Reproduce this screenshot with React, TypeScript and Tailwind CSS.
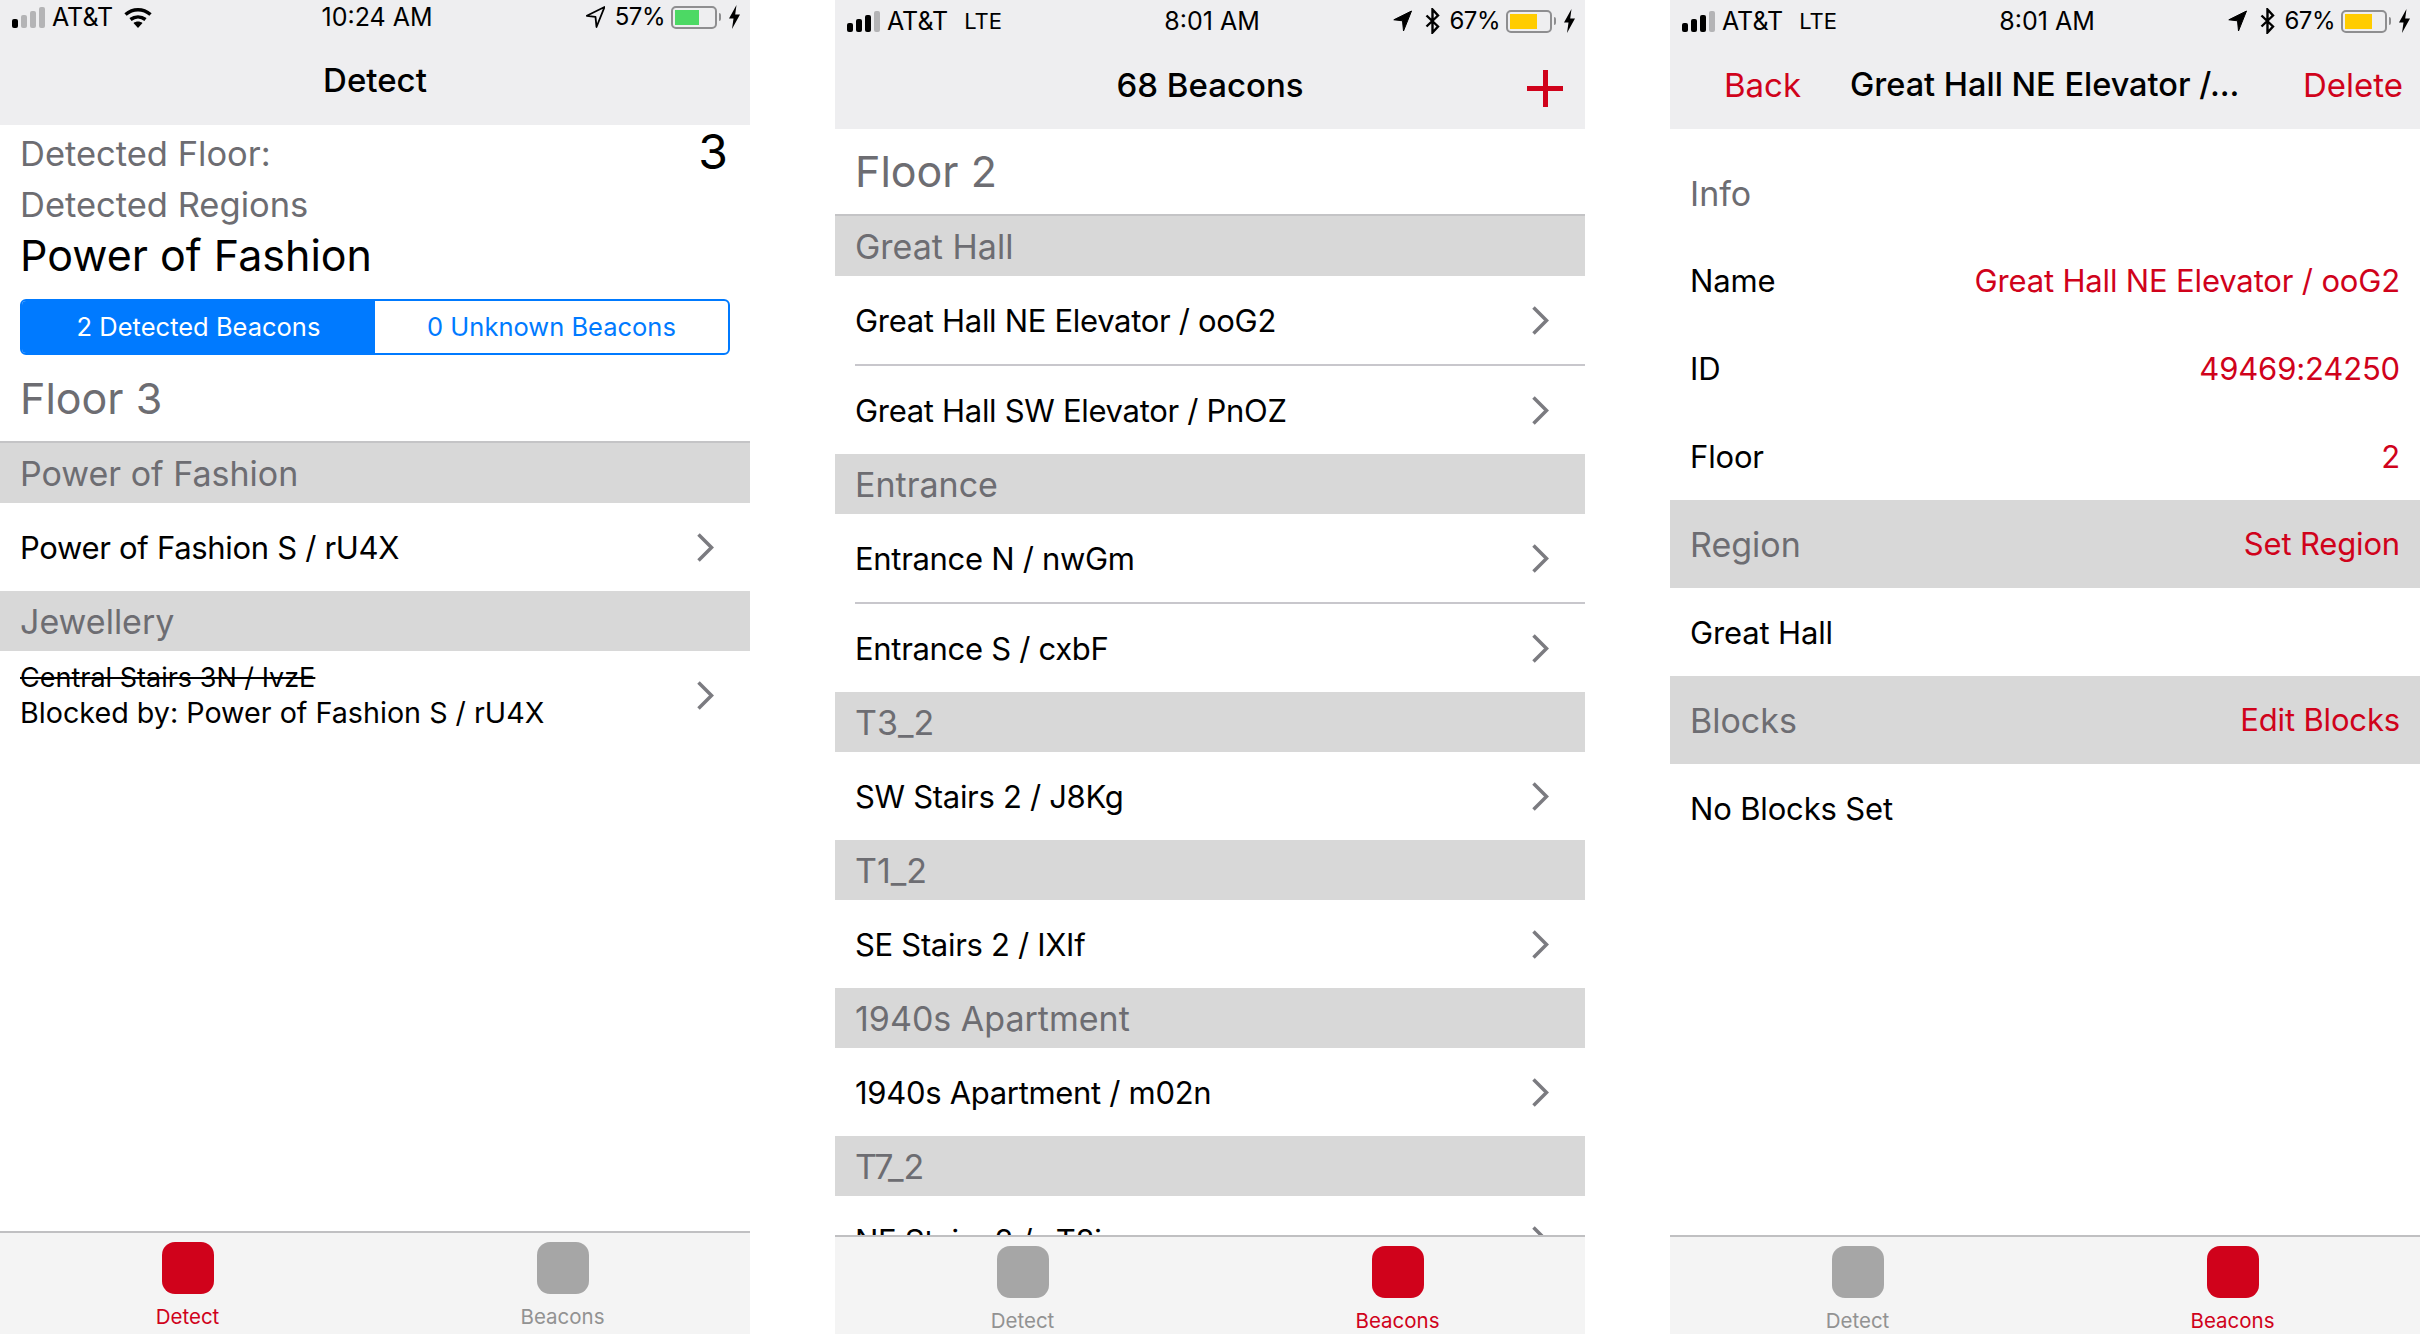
import React from 'react'

const sections = [
  { title: 'Great Hall', rows: ['Great Hall NE Elevator / ooG2', 'Great Hall SW Elevator / PnOZ'] },
  { title: 'Entrance', rows: ['Entrance N / nwGm', 'Entrance S / cxbF'] },
  { title: 'T3_2', rows: ['SW Stairs 2 / J8Kg'] },
  { title: 'T1_2', rows: ['SE Stairs 2 / IXIf'] },
  { title: '1940s Apartment', rows: ['1940s Apartment / m02n'] },
  { title: 'T7_2', rows: ['NE Stairs 2 / aT8i'] }
]

function Chevron() {
  return (
    <svg width="19" height="31" viewBox="0 0 19 31" className="shrink-0" fill="none">
      <path d="M2.500 2.500l13 13-13 13" stroke="#7b7b80" strokeWidth="3.500" />
    </svg>
  )
}

function Signal({ filled }: { filled: number }) {
  const heights = [9, 13, 17, 21]
  return (
    <div className="flex w-[33px] items-end gap-[3px]">
      {heights.map((h, i) => (
        <div
          key={h}
          className={`w-[6px] rounded-[2px] ${i < filled ? 'bg-black' : 'bg-[#b4b4b6]'}`}
          style={{ height: h }}
        />
      ))}
    </div>
  )
}

function Wifi() {
  return (
    <svg width="28" height="21" viewBox="0 0 28 21" fill="none" stroke="#000" strokeWidth="3.500">
      <path d="M1.500 7.500c7.500-6.500 17.500-6.500 25 0" />
      <path d="M6.500 12.500c4.500-3.500 10.500-3.500 15 0" />
      <path d="M14 21l-4.500-5c2.500-2 6.500-2 9 0z" fill="#000" stroke="none" />
    </svg>
  )
}

function Battery({ width, color }: { width: number; color: string }) {
  return (
    <div className="flex items-center">
      <div className="flex h-[23px] w-[46px] items-center rounded-[5px] border-2 border-[#8e8e90] px-[2px]">
        <div className={`h-[15px] ${color}`} style={{ width }} />
      </div>
      <div className="ml-[2px] h-[8px] w-[2px] rounded-r-full bg-[#8e8e90]" />
    </div>
  )
}

function Bolt() {
  return (
    <svg width="11" height="24" viewBox="0 0 11 24" className="ml-[8px]">
      <path d="M7.500 0L0 13.500h4.500L3 24l8-14.500H6.200z" fill="#000" />
    </svg>
  )
}

function LocationArrow({ outline }: { outline?: boolean }) {
  return (
    <svg width="19" height="22" viewBox="0 0 19 22">
      <path
        d="M18.500 1L.8 9.800l8.700 1 1 10.200z"
        fill={outline ? 'none' : '#000'}
        stroke="#000"
        strokeWidth={outline ? 1.800 : 1}
        strokeLinejoin="round"
      />
    </svg>
  )
}

function BluetoothIcon() {
  return (
    <svg width="15" height="26" viewBox="0 0 15 26" fill="none" className="ml-[13px]">
      <path d="M1.500 7.500l11.500 11-5.500 6v-23L13 7.500l-11.500 11" stroke="#000" strokeWidth="2.400" />
    </svg>
  )
}

function StatusLeft({ filled, lte }: { filled: number; lte?: boolean }) {
  return (
    <div className="flex items-center">
      <Signal filled={filled} />
      <span className="ml-[7px]">AT&amp;T</span>
      {lte ? <span className="ml-[16px] text-[22px]">LTE</span> : <span className="ml-[11px]"><Wifi /></span>}
    </div>
  )
}

function StatusRight() {
  return (
    <div className="flex items-center justify-end">
      <LocationArrow />
      <BluetoothIcon />
      <span className="ml-[9px] text-[24px] tracking-[-0.02em]">67%</span>
      <div className="ml-[6px]">
        <Battery width={27} color="bg-[#ffcc00]" />
      </div>
      <Bolt />
    </div>
  )
}

function TabBar({ active, height }: { active: 'Detect' | 'Beacons'; height: string }) {
  return (
    <div className={`grid shrink-0 grid-cols-2 overflow-hidden border-t-2 border-[#c0c0c2] bg-[#f4f4f4] pt-[9px] ${height}`}>
      {(['Detect', 'Beacons'] as const).map(name => (
        <div key={name} className="flex flex-col items-center">
          <div className={`h-[52px] w-[52px] shrink-0 rounded-[13px] ${name === active ? 'bg-[#d0021b]' : 'bg-[#a6a6a6]'}`} />
          <div className={`mt-[11px] text-[20.500px] leading-[24px] ${name === active ? 'text-[#d0021b]' : 'text-[#929292]'}`}>
            {name}
          </div>
        </div>
      ))}
    </div>
  )
}

function SectionHeader({ title, first }: { title: string; first?: boolean }) {
  return (
    <div className={`flex shrink-0 items-center bg-[#d8d8d8] px-[20px] pt-[1px] text-[34px] text-[#6d6d72] ${first ? 'h-[62px] border-t-2 border-[#c4c4c6]' : 'h-[60px]'}`}>
      {title}
    </div>
  )
}

function BeaconRow({ name }: { name: string }) {
  return (
    <div className="flex h-[88px] shrink-0 items-center pr-[35px] pl-[20px] text-[31px] tracking-[-0.01em] text-black">
      <span className="flex-1 pt-[2px]">{name}</span>
      <Chevron />
    </div>
  )
}

function DetailRow({ label, value }: { label: string; value?: string }) {
  return (
    <div className="flex h-[88px] items-center justify-between px-[20px] pt-[2px] text-[31px] tracking-[-0.005em]">
      <span className="text-black">{label}</span>
      {value && <span className="text-[#d0021b]">{value}</span>}
    </div>
  )
}

function DetailHeader({ title, action }: { title: string; action: string }) {
  return (
    <div className="flex h-[88px] items-center justify-between bg-[#d8d8d8] px-[20px] pt-[1px]">
      <span className="text-[34px] text-[#6d6d72]">{title}</span>
      <span className="text-[31px] tracking-[-0.005em] text-[#d0021b]">{action}</span>
    </div>
  )
}

function DetectScreen() {
  return (
    <div className="flex h-[1334px] w-[750px] flex-col overflow-hidden bg-white">
      <div className="h-[125px] shrink-0 bg-[#eeeef0]">
        <div className="grid h-[34px] grid-cols-3 items-center pr-[10px] pl-[12px] text-[25px] leading-none">
          <StatusLeft filled={1} />
          <div className="pl-[2px] text-center">10:24 AM</div>
          <div className="flex items-center justify-end">
            <LocationArrow outline />
            <span className="ml-[10px] text-[24px] tracking-[-0.02em]">57%</span>
            <div className="ml-[6px]">
              <Battery width={24} color="bg-[#4cd964]" />
            </div>
            <Bolt />
          </div>
        </div>
        <div className="mt-[25px] text-center text-[33px] leading-[42px] font-medium">Detect</div>
      </div>
      <div className="flex-1 overflow-hidden">
        <div className="px-[20px]">
          <div className="flex h-[55px] items-start justify-between pr-[2px]">
            <span className="mt-[4px] text-[34.500px] leading-[50px] text-[#6d6d72]">Detected Floor:</span>
            <span className="text-[48px] leading-[54px] text-black">3</span>
          </div>
          <div className="text-[34.500px] leading-[50px] text-[#6d6d72]">Detected Regions</div>
          <div className="text-[43px] leading-[50px] text-black">Power of Fashion</div>
          <div className="mt-[19px] grid h-[56px] grid-cols-2 overflow-hidden rounded-[6px] border-2 border-[#007aff] text-[25.500px]">
            <div className="flex items-center justify-center bg-[#007aff] text-white">2 Detected Beacons</div>
            <div className="flex items-center justify-center text-[#007aff]">0 Unknown Beacons</div>
          </div>
          <div className="flex h-[86px] items-center text-[43px] text-[#6d6d72]">Floor 3</div>
        </div>
        <SectionHeader title="Power of Fashion" first />
        <BeaconRow name="Power of Fashion S / rU4X" />
        <SectionHeader title="Jewellery" />
        <div className="flex h-[88px] items-center pr-[35px] pl-[20px] leading-[35px] text-black">
          <div className="flex-1">
            <div className="text-[27px] line-through">Central Stairs 3N / IvzE</div>
            <div className="text-[28.700px]">Blocked by: Power of Fashion S / rU4X</div>
          </div>
          <Chevron />
        </div>
      </div>
      <TabBar active="Detect" height="h-[103px]" />
    </div>
  )
}

function BeaconsScreen() {
  return (
    <div className="flex h-[1334px] w-[750px] flex-col overflow-hidden bg-white">
      <div className="h-[129px] shrink-0 bg-[#eeeef0] pt-[4px]">
        <div className="grid h-[34px] grid-cols-3 items-center pr-[10px] pl-[12px] text-[25px] leading-none">
          <StatusLeft filled={3} lte />
          <div className="pl-[2px] text-center">8:01 AM</div>
          <StatusRight />
        </div>
        <div className="relative mt-[26px] text-center text-[33px] leading-[42px] font-medium">
          68 Beacons
          <div className="absolute top-[6px] right-[22px] h-[37px] w-[36px]">
            <div className="absolute top-[16px] left-0 h-[5px] w-[36px] bg-[#d0021b]" />
            <div className="absolute top-0 left-[16px] h-[37px] w-[5px] bg-[#d0021b]" />
          </div>
        </div>
      </div>
      <div className="flex-1 overflow-hidden">
        <div className="flex h-[85px] items-center px-[20px] text-[43px] text-[#6d6d72]">Floor 2</div>
        {sections.map((section, s) => (
          <div key={section.title}>
            <SectionHeader title={section.title} first={s === 0} />
            {section.rows.map((row, r) => (
              <div key={row}>
                {r > 0 && <div className="ml-[20px] h-[2px] bg-[#c8c7cc]" />}
                <BeaconRow name={row} />
              </div>
            ))}
          </div>
        ))}
      </div>
      <TabBar active="Beacons" height="h-[99px]" />
    </div>
  )
}

function DetailScreen() {
  return (
    <div className="flex h-[1334px] w-[750px] flex-col overflow-hidden bg-white">
      <div className="h-[129px] shrink-0 bg-[#eeeef0] pt-[4px]">
        <div className="grid h-[34px] grid-cols-3 items-center pr-[10px] pl-[12px] text-[25px] leading-none">
          <StatusLeft filled={3} lte />
          <div className="pl-[2px] text-center">8:01 AM</div>
          <StatusRight />
        </div>
        <div className="mt-[26px] flex items-center pr-[17px] pl-[54px] text-[33px] leading-[42px]">
          <span className="w-[126px] text-[#d0021b]">Back</span>
          <span className="flex-1 text-[32.500px] font-medium">Great Hall NE Elevator /...</span>
          <span className="text-[#d0021b]">Delete</span>
        </div>
      </div>
      <div className="flex-1 overflow-hidden">
        <div className="flex h-[107px] items-center px-[20px] pt-[21px] text-[34px] text-[#6d6d72]">Info</div>
        <DetailRow label="Name" value="Great Hall NE Elevator / ooG2" />
        <DetailRow label="ID" value="49469:24250" />
        <DetailRow label="Floor" value="2" />
        <DetailHeader title="Region" action="Set Region" />
        <DetailRow label="Great Hall" />
        <DetailHeader title="Blocks" action="Edit Blocks" />
        <DetailRow label="No Blocks Set" />
      </div>
      <TabBar active="Beacons" height="h-[99px]" />
    </div>
  )
}

export default function App() {
  return (
    <div className="flex h-[1334px] w-[2420px] justify-between overflow-hidden bg-white font-['Inter',sans-serif]">
      <DetectScreen />
      <BeaconsScreen />
      <DetailScreen />
    </div>
  )
}
